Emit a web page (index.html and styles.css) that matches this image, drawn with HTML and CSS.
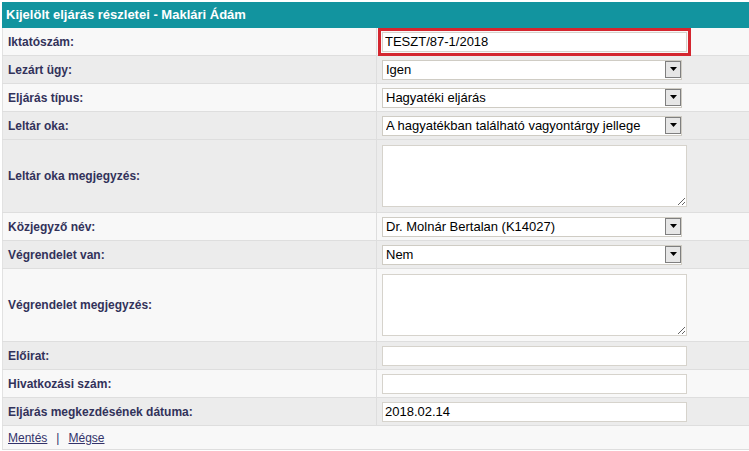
FILE: index.html
```html
<!DOCTYPE html>
<html lang="hu">
<head>
  <meta charset="UTF-8">
  <title>Kijelölt eljárás részletei</title>
  <link rel="stylesheet" href="styles.css">
</head>
<body>
  <div class="panel">
    <div class="panel-title">Kijelölt eljárás részletei - Maklári Ádám</div>
    <table class="details">
      <tr class="light">
        <td class="label">Iktatószám:</td>
        <td class="value"><input type="text" class="field focused" value="TESZT/87-1/2018"></td>
      </tr>
      <tr class="dark">
        <td class="label">Lezárt ügy:</td>
        <td class="value">
          <span class="select"><select><option>Igen</option><option>Nem</option></select><span class="arrow"><svg width="7" height="4" viewBox="0 0 7 4"><path d="M0 0h7L3.5 4z" fill="#000"/></svg></span></span>
        </td>
      </tr>
      <tr class="light">
        <td class="label">Eljárás típus:</td>
        <td class="value">
          <span class="select"><select><option>Hagyatéki eljárás</option></select><span class="arrow"><svg width="7" height="4" viewBox="0 0 7 4"><path d="M0 0h7L3.5 4z" fill="#000"/></svg></span></span>
        </td>
      </tr>
      <tr class="dark">
        <td class="label">Leltár oka:</td>
        <td class="value">
          <span class="select"><select><option>A hagyatékban található vagyontárgy jellege</option></select><span class="arrow"><svg width="7" height="4" viewBox="0 0 7 4"><path d="M0 0h7L3.5 4z" fill="#000"/></svg></span></span>
        </td>
      </tr>
      <tr class="dark tall">
        <td class="label">Leltár oka megjegyzés:</td>
        <td class="value"><textarea class="note"></textarea></td>
      </tr>
      <tr class="light">
        <td class="label">Közjegyző név:</td>
        <td class="value">
          <span class="select"><select><option>Dr. Molnár Bertalan (K14027)</option></select><span class="arrow"><svg width="7" height="4" viewBox="0 0 7 4"><path d="M0 0h7L3.5 4z" fill="#000"/></svg></span></span>
        </td>
      </tr>
      <tr class="dark">
        <td class="label">Végrendelet van:</td>
        <td class="value">
          <span class="select"><select><option>Nem</option><option>Igen</option></select><span class="arrow"><svg width="7" height="4" viewBox="0 0 7 4"><path d="M0 0h7L3.5 4z" fill="#000"/></svg></span></span>
        </td>
      </tr>
      <tr class="light tall">
        <td class="label">Végrendelet megjegyzés:</td>
        <td class="value"><textarea class="note"></textarea></td>
      </tr>
      <tr class="dark">
        <td class="label">Előirat:</td>
        <td class="value"><input type="text" class="field"></td>
      </tr>
      <tr class="light">
        <td class="label">Hivatkozási szám:</td>
        <td class="value"><input type="text" class="field"></td>
      </tr>
      <tr class="dark">
        <td class="label">Eljárás megkezdésének dátuma:</td>
        <td class="value"><input type="text" class="field" value="2018.02.14"></td>
      </tr>
      <tr class="light actions">
        <td colspan="2"><a href="#">Mentés</a><span class="sep">|</span><a href="#">Mégse</a></td>
      </tr>
    </table>
  </div>
</body>
</html>
```

FILE: styles.css
```css
html, body { margin: 0; overflow: hidden; background: #fff; }
body { font-family: "Liberation Sans", Arial, sans-serif; padding: 2px 0 0 2px; }
.panel { width: 747px; }
.panel-title { background: #12949f; color: #fff; font-weight: bold; font-size: 13px; height: 26px; line-height: 26px; padding-left: 4px; }
.details { border-collapse: collapse; width: 100%; }
.details td { padding: 0; height: 27px; border-bottom: 1px solid #dedede; vertical-align: middle; }
.details tr.tall td { height: 72px; }
.light { background: #f8f8f8; }
.dark { background: #ececec; }
.label { width: 368px; padding-left: 5px !important; border-left: 1px solid #e2e2e2; border-right: 1px solid #dedede; font-size: 12px; font-weight: bold; color: #32325a; }
.value { padding-left: 5px !important; font-size: 0; }
.field { box-sizing: border-box; width: 305px; height: 20px; border: 1px solid #d6d3cc; background: #fff; padding: 0 2px; font: 13px "Liberation Sans", Arial, sans-serif; color: #000; vertical-align: middle; }
.focused { outline: 3px solid #d4262f; outline-offset: 1px; }
.select { position: relative; display: inline-block; width: 300px; height: 20px; vertical-align: middle; }
.select select { appearance: none; -webkit-appearance: none; box-sizing: border-box; width: 100%; height: 20px; border: 1px solid #cfccc4; border-radius: 0; background: #fff; padding: 0 0 0 3px; font: 13px "Liberation Sans", Arial, sans-serif; color: #000; }
.arrow { position: absolute; right: 1px; top: 1px; box-sizing: border-box; width: 16px; height: 17px; border: 1px solid #7f7f7f; background: #e6e6e6; display: flex; align-items: center; justify-content: center; pointer-events: none; }
.note { box-sizing: border-box; width: 305px; height: 62px; border: 1px solid #d6d3cc; background: #fff; vertical-align: middle; font: 13px "Liberation Sans", Arial, sans-serif; }
.actions td { height: 23px; padding-left: 5px; font-size: 12px; border-left: 1px solid #e2e2e2; }
.actions a { color: #33336b; }
.sep { color: #33336b; margin: 0 9px; }
```
